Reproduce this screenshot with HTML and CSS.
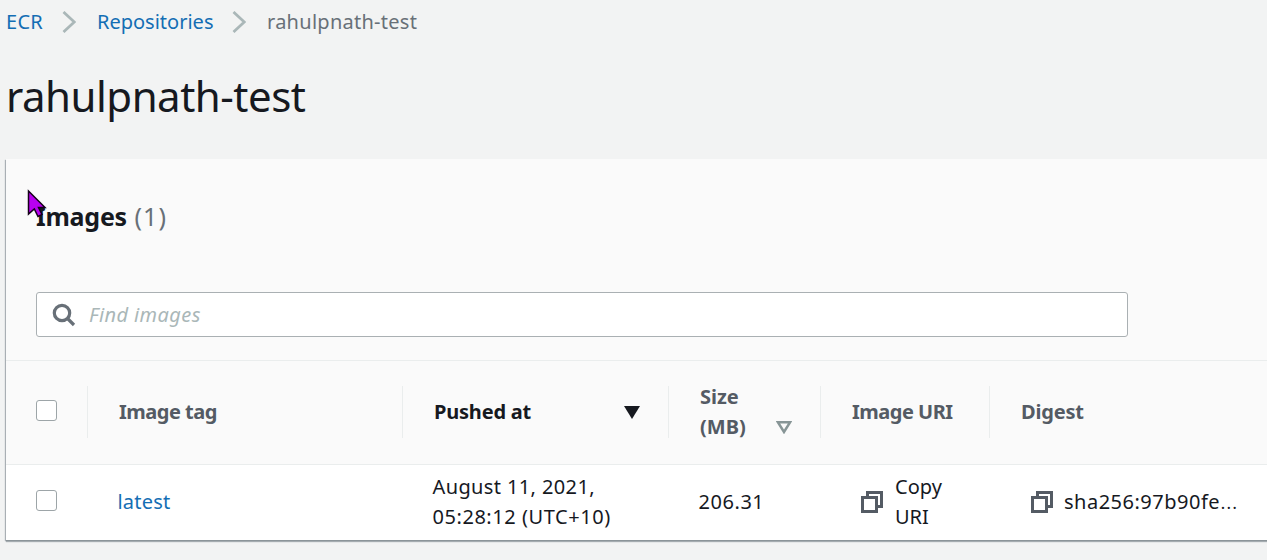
FILE: index.html
```html
<!DOCTYPE html>
<html lang="en">
<head>
<meta charset="utf-8">
<title>rahulpnath-test</title>
<link rel="stylesheet" href="styles.css">
</head>
<body>
<nav class="breadcrumbs">
  <a class="crumb crumb-root">ECR</a>
  <svg class="chevron" viewBox="0 0 14 22"><path d="M1.500 1 12.300 11 1.500 21"/></svg>
  <a class="crumb crumb-repos">Repositories</a>
  <svg class="chevron" viewBox="0 0 14 22"><path d="M1.500 1 12.300 11 1.500 21"/></svg>
  <span class="crumb current">rahulpnath-test</span>
</nav>
<h1 class="title">rahulpnath-test</h1>
<main class="panel">
  <header class="panel-head">
    <h2 class="heading"><span class="heading-name">Images</span> <span class="count">(1)</span></h2>
    <div class="search">
      <svg class="search-icon" viewBox="0 0 24 24"><circle cx="10" cy="10" r="7.700"/><path d="M15.500 15.500 22 22"/></svg>
      <span class="placeholder">Find images</span>
    </div>
  </header>
  <div class="row columns">
    <div class="cell"><span class="checkbox"></span></div>
    <div class="cell"><span class="label t-tag">Image tag</span></div>
    <div class="cell sorted"><span class="label t-pushed">Pushed at</span><svg class="sort" viewBox="0 0 16 13"><path class="solid" d="M0 0H16L8 13Z"/></svg></div>
    <div class="cell size"><span class="label">Size<br>(MB)</span><svg class="sort low" viewBox="0 0 16 13"><path class="hollow" d="M2 1.300H14L8 11Z"/></svg></div>
    <div class="cell"><span class="label t-uri">Image URI</span></div>
    <div class="cell"><span class="label t-digest">Digest</span></div>
  </div>
  <div class="row data">
    <div class="cell"><span class="checkbox"></span></div>
    <div class="cell"><a class="latest">latest</a></div>
    <div class="cell"><span class="date"><span class="date-day">August 11, 2021,</span><br><span class="date-time">05:28:12 (UTC+10)</span></span></div>
    <div class="cell"><span class="mb">206.31</span></div>
    <div class="cell copy"><svg class="copy-icon" viewBox="0 0 22 22"><path d="M6.500 6V1.500H20.500V15.500H16M1.500 6.500H15.500V20.500H1.500Z"/></svg><span class="copy-text">Copy<br>URI</span></div>
    <div class="cell copy digest"><svg class="copy-icon" viewBox="0 0 22 22"><path d="M6.500 6V1.500H20.500V15.500H16M1.500 6.500H15.500V20.500H1.500Z"/></svg><span class="sha">sha256:97b90fe<span class="ellipsis">…</span></span></div>
  </div>
</main>
<svg class="cursor" viewBox="0 0 20 29"><path d="M1.500 2V25L7.300 20 11 27.500 15 25.500 11.500 18.500H18Z"/></svg>
</body>
</html>
```
FILE: styles.css
```css
* { box-sizing: border-box; }
body {
  margin: 0;
  height: 560px;
  overflow: hidden;
  background: #f2f3f3;
  color: #16191f;
  font: 20px/30px "Noto Sans", sans-serif;
}
.breadcrumbs { display: flex; align-items: center; height: 44px; padding-left: 6px; }
.crumb { color: #146eb4; white-space: nowrap; }
.crumb-root { width: 56px; letter-spacing: 0.3px; }
.crumb-repos { width: 135px; }
.current { color: #687078; letter-spacing: 0.27px; }
.chevron { width: 14px; height: 22px; margin-right: 21px; fill: none; stroke: #aab7b8; stroke-width: 2.800; }
.title { margin: 22px 0 0 6px; height: 60px; font-size: 42px; line-height: 60px; font-weight: 400; letter-spacing: -0.5px; white-space: nowrap; }
.panel { margin: 33px 0 0 6px; height: 381px; background: #fff; box-shadow: 0 1px 0 #8b9499, 0 2px 1px #a5acb0, -1px 1px 1px #aab0b5; }
.panel-head { height: 202px; padding: 39px 0 0 30px; background: #fafafa; border-bottom: 1px solid #eaeded; }
.heading { margin: 0; height: 36px; font-size: 25px; line-height: 36px; font-weight: 700; white-space: nowrap; }
.heading-name { letter-spacing: -0.25px; }
.count { margin-left: 1px; color: #687078; font-weight: 400; letter-spacing: 1.200px; }
.search { display: flex; align-items: center; width: 1092px; height: 45px; margin-top: 58px; padding-left: 15px; background: #fff; border: 1px solid #aab0b3; border-radius: 3px; }
.search-icon { width: 24px; height: 24px; margin-right: 13px; fill: none; stroke: #687078; stroke-width: 3.200; }
.placeholder { color: #aab7b8; font-style: italic; letter-spacing: 0.4px; }
.row { display: grid; grid-template-columns: 82px 315px 266px 152px 169px 277px; }
.columns { height: 104px; padding-bottom: 2px; align-items: center; background: #fafafa; border-bottom: 1px solid #eaeded; }
.cell { display: flex; align-items: center; padding-left: 31px; white-space: nowrap; }
.cell:first-child { padding-left: 30px; }
.columns .cell { height: 52px; border-right: 1px solid #eaeded; }
.columns .cell:last-child { border-right: 0; }
.label { color: #545b64; font-weight: 700; }
.t-tag, .t-uri { letter-spacing: -0.5px; }
.t-pushed { letter-spacing: -0.2px; }
.t-digest { letter-spacing: -0.2px; }
.sorted, .size { justify-content: space-between; padding-right: 28px; }
.sorted .label { color: #16191f; }
.sort { width: 16px; height: 13px; margin-top: 2px; }
.low { margin-top: 32px; }
.solid { fill: #16191f; }
.hollow { fill: none; stroke: #879596; stroke-width: 2.500; }
.checkbox { width: 21px; height: 21px; margin-bottom: 2px; background: #fff; border: 1px solid #9da5a8; border-radius: 3px; }
.data { height: 76px; padding-bottom: 2px; align-items: center; }
.data .checkbox { margin-bottom: 4px; }
.data .cell { padding-left: 29.500px; }
.data .cell:first-child { padding-left: 30px; }
.latest { color: #146eb4; letter-spacing: 0.2px; }
.date-day { letter-spacing: 0.38px; }
.date-time, .mb { letter-spacing: 0.55px; }
.data .copy { padding-left: 40px; }
.data .digest { padding-left: 41px; }
.copy-icon { width: 22px; height: 22px; margin-right: 12px; fill: none; stroke: #545b64; stroke-width: 3; }
.digest .copy-icon { margin-right: 11px; }
.sha { letter-spacing: 0.5px; }
.ellipsis { font-size: 24px; line-height: 20px; font-weight: 300; }
.cursor { position: absolute; left: 27px; top: 189px; width: 20px; height: 29px; fill: #b800f0; stroke: #150019; stroke-width: 1.500; }
```
